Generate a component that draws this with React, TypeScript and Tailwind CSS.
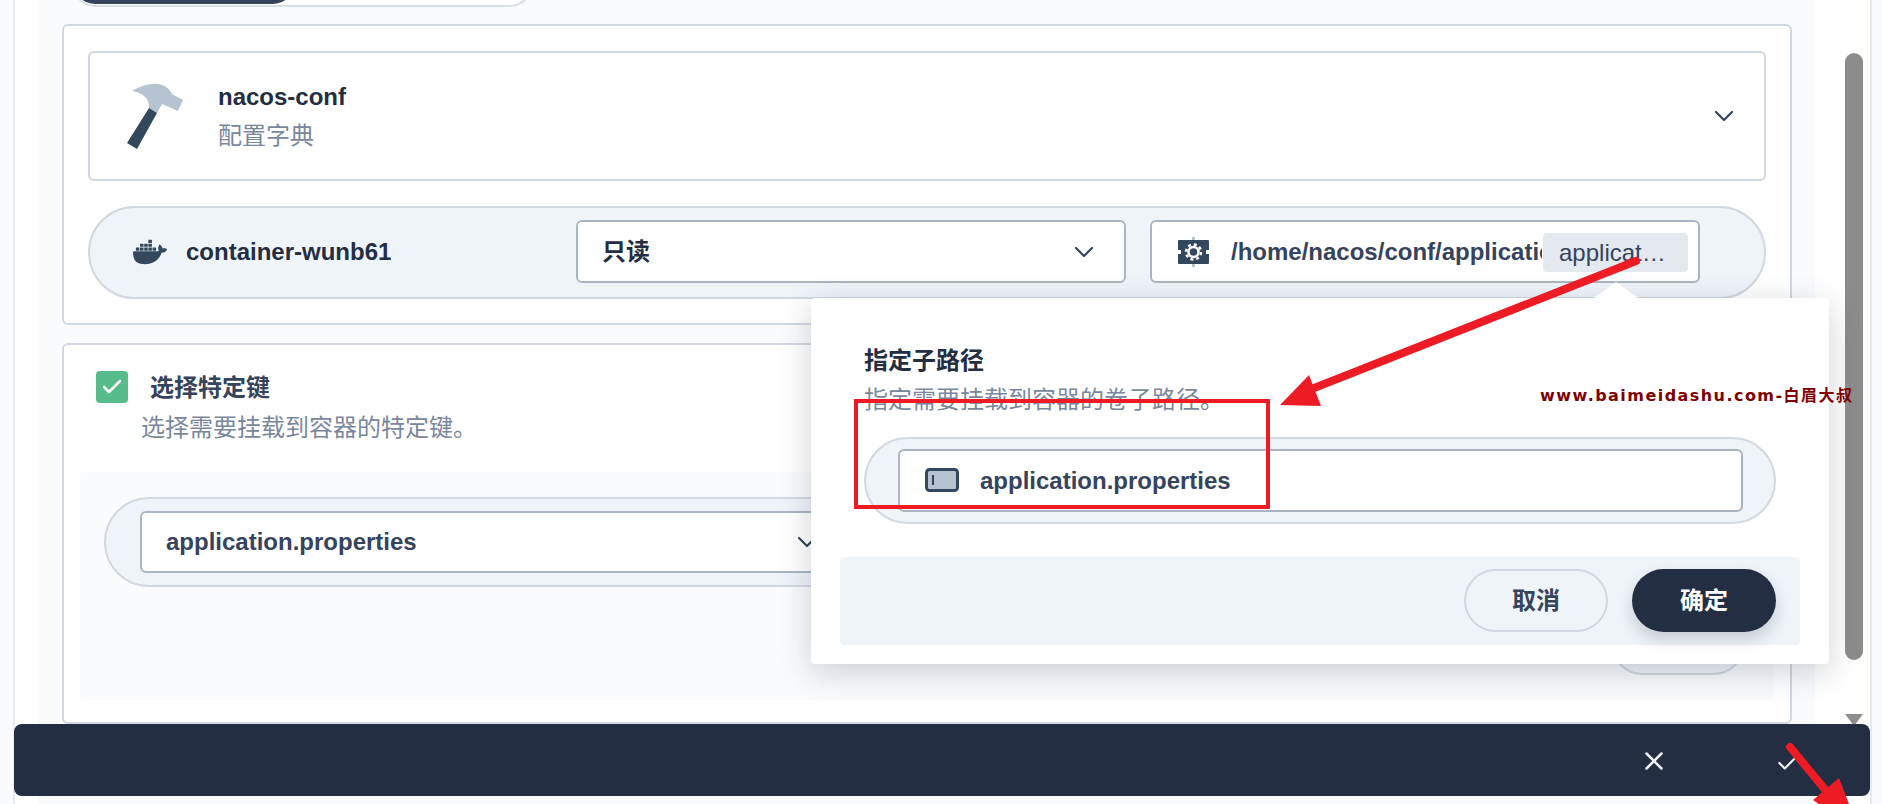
import { ChevronDown, Check, X } from 'lucide-react';
import { SiDocker } from 'react-icons/si';

const FONT = "font-['Liberation_Sans','Noto_Sans_CJK_SC',sans-serif]";

function HammerIcon() {
  return (
    <svg width="60" height="70" viewBox="25 20 60 70" className="shrink-0">
      <path d="M32 30C40 25 50 22 58 23C65 24 70 28 72 33L83 39L78 50L62 43L57 52L49 47C50 40 45 32 32 30Z" fill="#b6c3d1" />
      <path d="M49 47L57 52L37 88L27 82Z" fill="#33475d" />
    </svg>
  );
}

function GearBoxIcon() {
  return (
    <svg width="31" height="30" viewBox="0 0 31 30" className="shrink-0">
      <rect x="14" y="0" width="3" height="30" fill="#b6c3d1" />
      <rect x="0" y="3" width="31" height="24" rx="1" fill="#33475d" />
      <rect x="0" y="13" width="3" height="4" fill="#fff" />
      <rect x="28" y="13" width="3" height="4" fill="#fff" />
      <circle cx="15.5" cy="15" r="5" fill="none" stroke="#fff" strokeWidth="2.5" />
      <circle cx="15.5" cy="15" r="7.5" fill="none" stroke="#fff" strokeWidth="2.5" strokeDasharray="3 2.9" />
    </svg>
  );
}

function VolumeIcon() {
  return (
    <svg width="34" height="24" viewBox="0 0 34 24" className="shrink-0">
      <rect x="1.5" y="1.5" width="31" height="21" rx="3" fill="#b6c3d1" stroke="#33475d" strokeWidth="3" />
      <rect x="7" y="7" width="2" height="10" fill="#33475d" />
    </svg>
  );
}

// red marks drawn over the screenshot
function Annotations() {
  return (
    <svg className="absolute inset-0 z-30 pointer-events-none" width="1882" height="804">
      <line x1="1636" y1="261" x2="1304" y2="392" stroke="#ed1c24" strokeWidth="8" strokeLinecap="round" />
      <polygon points="1280,405 1309,375 1321,406" fill="#ed1c24" />
      <rect x="856" y="401" width="412" height="106" fill="none" stroke="#ed1c24" strokeWidth="4" />
      <line x1="1790" y1="747" x2="1832" y2="798" stroke="#ed1c24" strokeWidth="8" strokeLinecap="round" />
      <polygon points="1839,778 1813,800 1830,812 1852,812" fill="#ed1c24" />
    </svg>
  );
}

export default function App() {
  return (
    <div className={`relative flex w-[1882px] h-[804px] overflow-hidden bg-[#f9fbfd] text-[#36435c] ${FONT}`}>
      <div className="flex ml-[13px] w-[1859px] border-x-2 border-[#e6ebf2] bg-white">
        {/* scrolled content */}
        <div className="w-[1777px] ml-[23px] pl-[24px] pr-[23px] bg-[#f9fbfd]">
          <div className="-mt-[43px] ml-[9px] w-[463px] h-[50px] rounded-full border-2 border-[#d8dee6] bg-white">
            <div className="w-[222px] h-[45px] rounded-full bg-[#33435c]" />
          </div>

          <div className="mt-[17px] h-[301px] rounded-md border-2 border-[#d1d8e1] bg-white px-[24px] pt-[25px]">
            <div className="flex items-center h-[130px] rounded-md border-2 border-[#d1d8e1] pl-[35px] pr-[24px]">
              <HammerIcon />
              <div className="ml-[33px] flex-1">
                <div className="text-[24px] font-bold leading-[30px] text-[#242e42]">nacos-conf</div>
                <div className="mt-[9px] text-[24px] leading-[30px] text-[#79879c]">配置字典</div>
              </div>
              <ChevronDown size={32} strokeWidth={1.6} className="text-[#33435c]" />
            </div>

            <div className="flex items-center mt-[25px] h-[93px] rounded-full border-2 border-[#d1d8e1] bg-[#eff4f9] pl-[43px] pb-[2px]">
              <div className="flex items-center w-[443px]">
                <SiDocker size={34} className="text-[#33475d]" />
                <span className="ml-[19px] text-[24px] font-bold text-[#242e42]">container-wunb61</span>
              </div>
              <div className="flex items-center justify-between w-[550px] h-[63px] rounded-md border-2 border-[#abb4c2] bg-white pl-[24px] pr-[24px]">
                <span className="text-[24px] font-bold text-[#242e42]">只读</span>
                <ChevronDown size={32} strokeWidth={1.6} className="text-[#33435c]" />
              </div>
              <div className="relative flex items-center ml-[24px] w-[550px] h-[63px] rounded-md border-2 border-[#abb4c2] bg-white pl-[26px]">
                <GearBoxIcon />
                <span className="ml-[22px] w-[311px] overflow-hidden whitespace-nowrap text-[24px] font-bold">/home/nacos/conf/application.properties</span>
                <span className="absolute right-[10px] top-[11px] flex items-center w-[145px] h-[39px] rounded bg-[#e3e9ef] pl-[16px] text-[24px]">applicat…</span>
              </div>
            </div>
          </div>

          <div className="mt-[18px] h-[381px] rounded-md border-2 border-[#d1d8e1] bg-white pt-[26px] px-[16px]">
            <div className="flex items-center pl-[16px]">
              <span className="flex items-center justify-center w-[32px] h-[32px] rounded bg-[#55bc8a]">
                <Check size={24} strokeWidth={2.5} className="text-white" />
              </span>
              <span className="ml-[22px] mt-[2px] text-[24px] font-bold leading-[30px]">选择特定键</span>
            </div>
            <div className="mt-[10px] ml-[61px] text-[24px] leading-[30px] text-[#79879c]">选择需要挂载到容器的特定键。</div>
            <div className="mt-[29px] h-[228px] rounded bg-[#f9fbfd] pl-[24px] pr-[25px] pt-[25px]">
              <div className="flex items-center h-[90px] rounded-full border-2 border-[#d1d8e1] bg-[#eff4f9] pl-[34px]">
                <div className="flex items-center justify-between w-[709px] h-[62px] rounded-md border-2 border-[#abb4c2] bg-white pl-[24px] pr-[24px]">
                  <span className="text-[24px] font-bold">application.properties</span>
                  <ChevronDown size={32} strokeWidth={1.6} className="text-[#33435c]" />
                </div>
              </div>
              <div className="flex justify-end mt-[25px] pr-[4px]">
                <div className="w-[134px] h-[63px] rounded-full border-2 border-[#d1d8e1] bg-[#eff4f9]" />
              </div>
            </div>
          </div>
        </div>

        {/* scrollbar */}
        <div className="flex-1 pl-[30px] pt-[53px]">
          <div className="w-[18px] h-[607px] rounded-full bg-[#8c8c8c]" />
          <div className="mt-[54px] w-0 h-0 border-x-[9px] border-t-[12px] border-x-transparent border-t-[#8c8c8c]" />
        </div>
      </div>

      {/* popover */}
      <div className="absolute z-20 left-[811px] top-[298px] w-[1018px] h-[366px] rounded bg-white shadow-[0_8px_32px_rgba(36,46,66,0.22)]">
        <div className="absolute -top-[16px] left-[783px] w-[44px] h-[16px] bg-white [clip-path:polygon(50%_0,100%_100%,0_100%)]" />
        <div className="pt-[48px] pl-[53px] text-[24px] font-bold leading-[30px] text-[#242e42]">指定子路径</div>
        <div className="mt-[9px] pl-[53px] text-[24px] leading-[30px] text-[#79879c]">指定需要挂载到容器的卷子路径。</div>
        <div className="flex items-center mt-[22px] mx-[53px] h-[87px] rounded-full border-2 border-[#d1d8e1] bg-[#eff4f9] pl-[32px] pr-[31px] pb-[1px]">
          <div className="flex flex-1 items-center h-[63px] rounded-md border-2 border-[#abb4c2] bg-white pl-[25px]">
            <VolumeIcon />
            <span className="ml-[21px] mt-[2px] text-[24px] font-bold">application.properties</span>
          </div>
        </div>
        <div className="flex items-center justify-end gap-[24px] mt-[33px] mx-[29px] h-[88px] rounded bg-[#eff4f9] pr-[24px] pb-[1px]">
          <button className="w-[144px] h-[63px] rounded-full border-2 border-[#d1d8e1] bg-[#eff4f9] text-[24px] font-bold">取消</button>
          <button className="w-[144px] h-[63px] rounded-full bg-[#242e42] text-[24px] font-bold text-white shadow-[0_8px_16px_rgba(36,46,66,0.2)]">确定</button>
        </div>
      </div>

      {/* watermark */}
      <div className="absolute z-40 left-[1540px] top-[386px] font-['DejaVu_Sans','Noto_Sans_CJK_SC',sans-serif] text-[16px] leading-[20px] tracking-[1.45px] font-bold text-[#800000] whitespace-nowrap">www.baimeidashu.com-白眉大叔</div>

      {/* bottom bar */}
      <div className="absolute z-10 left-[14px] top-[724px] flex items-center justify-end w-[1856px] h-[72px] rounded-lg bg-[#242e42] pr-[69px]">
        <X size={30} strokeWidth={2} className="text-[#eef2f7] mt-[2px]" />
        <Check size={26} strokeWidth={2} className="ml-[106px] mt-[6px] text-[#eef2f7]" />
      </div>

      <Annotations />
    </div>
  );
}
